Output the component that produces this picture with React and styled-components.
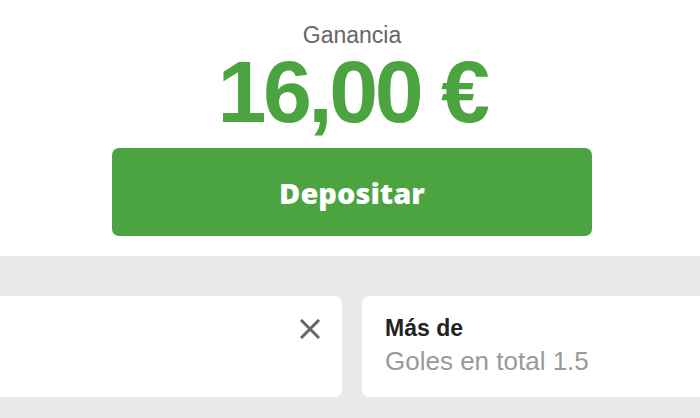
import React from 'react';
import styled, { createGlobalStyle } from 'styled-components';

const GlobalStyle = createGlobalStyle`
  html, body {
    margin: 0;
    padding: 0;
    background: #e9e9e9;
    font-family: "Liberation Sans", Arial, sans-serif;
  }
`;

//Top summary
const Summary = styled.section`
  background: #fff;
  padding: 22px 0 20px 4px;
  display: flex;
  flex-direction: column;
  align-items: center;`

const Label = styled.div`
  font-size: 23px;
  line-height: 26px;
  color: #666;`

const Amount = styled.div`
  margin-top: 6px;
  font-size: 88px;
  line-height: 76px;
  font-weight: 700;
  letter-spacing: -3.5px;
  color: #4ca440;`

const DepositButton = styled.button`
  margin-top: 18px;
  width: 480px;
  height: 88px;
  border: 0;
  border-radius: 7px;
  background: #4ca440;
  color: #fff;
  font-family: "Open Sans", Lato, sans-serif;
  font-weight: 800;
  font-size: 29px;
  cursor: pointer;`

//Bet slip carousel
const Tray = styled.section`
  padding-top: 40px;
  height: 122px;
  overflow: hidden;`

const Track = styled.div`
  display: flex;
  gap: 20px;
  transform: translateX(-18px);`

const Card = styled.div`
  position: relative;
  flex: 0 0 360px;
  height: 101px;
  box-sizing: border-box;
  padding: 18px 23px 0;
  background: #fff;
  border-radius: 7px;`

const Close = styled.button`
  position: absolute;
  top: 23px;
  right: 22px;
  width: 20px;
  height: 20px;
  padding: 0;
  border: 0;
  background: none;
  display: flex;`

const Pick = styled.div`
  font-size: 23px;
  line-height: 28px;
  font-weight: 700;
  color: #222;`

const Market = styled.div`
  margin-top: 4px;
  font-size: 26px;
  line-height: 30px;
  color: #999;`

const CloseIcon = () => (
  <svg width="20" height="20" viewBox="0 0 20 20">
    <path d="M2 2 L18 18 M18 2 L2 18" stroke="#666" strokeWidth="3" strokeLinecap="square" />
  </svg>
);

const bets = [
  { pick: '', market: '', closable: true },
  { pick: 'Más de', market: 'Goles en total 1.5', closable: false },
];

export default function App() {
  return (
    <>
      <GlobalStyle />
      <Summary>
        <Label>Ganancia</Label>
        <Amount>16,00 €</Amount>
        <DepositButton>Depositar</DepositButton>
      </Summary>
      <Tray>
        <Track>
          {bets.map((bet, i) => (
            <Card key={i}>
              {bet.pick && <Pick>{bet.pick}</Pick>}
              {bet.market && <Market>{bet.market}</Market>}
              {bet.closable && (
                <Close aria-label="Quitar">
                  <CloseIcon />
                </Close>
              )}
            </Card>
          ))}
        </Track>
      </Tray>
    </>
  );
}
